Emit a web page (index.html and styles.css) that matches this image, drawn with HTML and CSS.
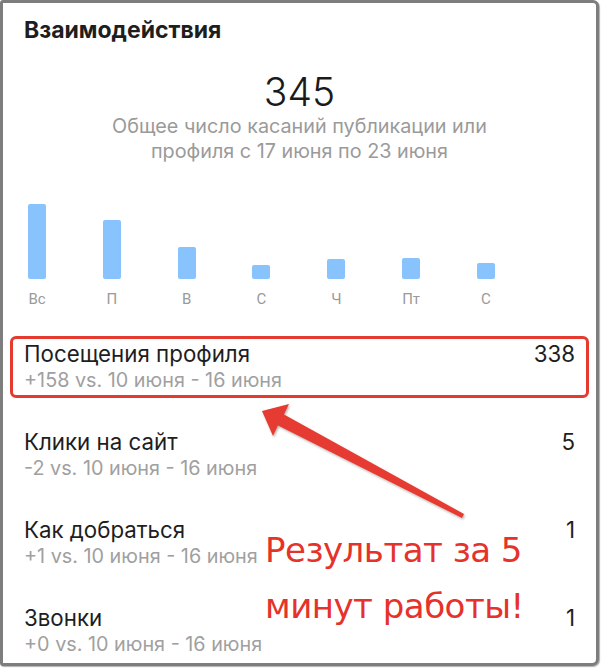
FILE: index.html
```html
<!DOCTYPE html>
<html lang="ru">
<head>
<meta charset="utf-8">
<link rel="stylesheet" href="styles.css">
</head>
<body>
<div class="frame">
  <div class="card">
    <h1 class="title">Взаимодействия</h1>
    <div class="total">345</div>
    <p class="caption">Общее число касаний публикации или<br>профиля с 17 июня по 23 июня</p>
    <div class="chart">
      <div class="col"><div class="bar" style="height:75px"></div><span class="day">Вс</span></div>
      <div class="col"><div class="bar" style="height:59px"></div><span class="day">П</span></div>
      <div class="col"><div class="bar" style="height:32px"></div><span class="day">В</span></div>
      <div class="col"><div class="bar" style="height:14px"></div><span class="day">С</span></div>
      <div class="col"><div class="bar" style="height:20px"></div><span class="day">Ч</span></div>
      <div class="col"><div class="bar" style="height:21px"></div><span class="day">Пт</span></div>
      <div class="col"><div class="bar" style="height:16px"></div><span class="day">С</span></div>
    </div>
    <ul class="rows">
      <li class="row row-hl"><div class="row-main"><span>Посещения профиля</span><span>338</span></div><div class="row-sub">+158 vs. 10 июня - 16 июня</div></li>
      <li class="row"><div class="row-main"><span>Клики на сайт</span><span>5</span></div><div class="row-sub">-2 vs. 10 июня - 16 июня</div></li>
      <li class="row"><div class="row-main"><span>Как добраться</span><span>1</span></div><div class="row-sub">+1 vs. 10 июня - 16 июня</div></li>
      <li class="row"><div class="row-main"><span>Звонки</span><span>1</span></div><div class="row-sub">+0 vs. 10 июня - 16 июня</div></li>
    </ul>
  </div>
  <svg class="arrow" width="602" height="668" viewBox="0 0 602 668">
    <defs>
      <filter id="sh" x="-10%" y="-10%" width="120%" height="120%">
        <feDropShadow dx="1" dy="1.5" stdDeviation="1" flood-color="#000" flood-opacity="0.3"/>
      </filter>
    </defs>
    <polygon filter="url(#sh)" fill="#e53a30" points="262,411 289,404 284,414.5 464,514 462,518 278,425.5 273,436"/>
  </svg>
  <div class="note">Результат за 5<br>минут работы!</div>
</div>
</body>
</html>
```

FILE: styles.css
```css
* { box-sizing: border-box; }
html, body { margin: 0; padding: 0; background: #fff; }
body { width: 602px; height: 668px; overflow: hidden; font-family: Inter, "Noto Sans", sans-serif; }
.frame {
  position: relative;
  width: 599px;
  height: 666px;
  border: 3px solid #7d7d7d;
  border-radius: 3px 6px 7px 3px;
  box-shadow: 1px 1px 1px #b0b0b0;
  background: #fff;
}
.card { padding: 15px 21px 0 21px; }
.title {
  margin: 0;
  font-size: 23px;
  line-height: 24px;
  font-weight: 700;
  color: #1e1e1e;
}
.total {
  margin-top: 28px;
  text-align: center;
  font-size: 39px;
  line-height: 44px;
  font-weight: 300;
  color: #1a1a1a;
}
.caption {
  margin: 0;
  text-align: center;
  font-size: 19.8px;
  line-height: 25px;
  color: #9a9a9a;
}
.chart {
  display: flex;
  justify-content: space-between;
  margin: 15px 0 0 -21px;
  width: 578px;
  padding: 0 86px 0 25px;
  font-family: Roboto, sans-serif;
}
.col {
  width: 18px;
  height: 130px;
  display: flex;
  flex-direction: column;
  align-items: center;
}
.bar {
  width: 18px;
  margin-top: auto;
  background: #88c3fd;
  border-radius: 2px;
}
.day {
  margin-top: 10px;
  height: 20px;
  line-height: 20px;
  font-size: 15px;
  color: #9a9a9a;
  white-space: nowrap;
}
.rows { list-style: none; margin: 27px 0 0 0; padding: 0; display: flex; flex-direction: column; gap: 26px; }
.row { padding: 5px 0; }
.row-hl {
  margin: 0 -14px;
  padding: 2px 11px;
  border: 3px solid #e53a30;
  border-radius: 6px;
}
.row-main {
  display: flex;
  justify-content: space-between;
  font-size: 22.3px;
  line-height: 26px;
  color: #1e1e1e;
}
.row-sub {
  font-size: 19.8px;
  line-height: 26px;
  color: #a0a0a0;
}
.arrow { position: absolute; left: -3px; top: -3px; pointer-events: none; }
.note {
  position: absolute;
  left: 262px;
  top: 519px;
  font-family: "DejaVu Sans", sans-serif;
  font-size: 34px;
  line-height: 56px;
  color: #e5322a;
  letter-spacing: -0.5px;
}
```
